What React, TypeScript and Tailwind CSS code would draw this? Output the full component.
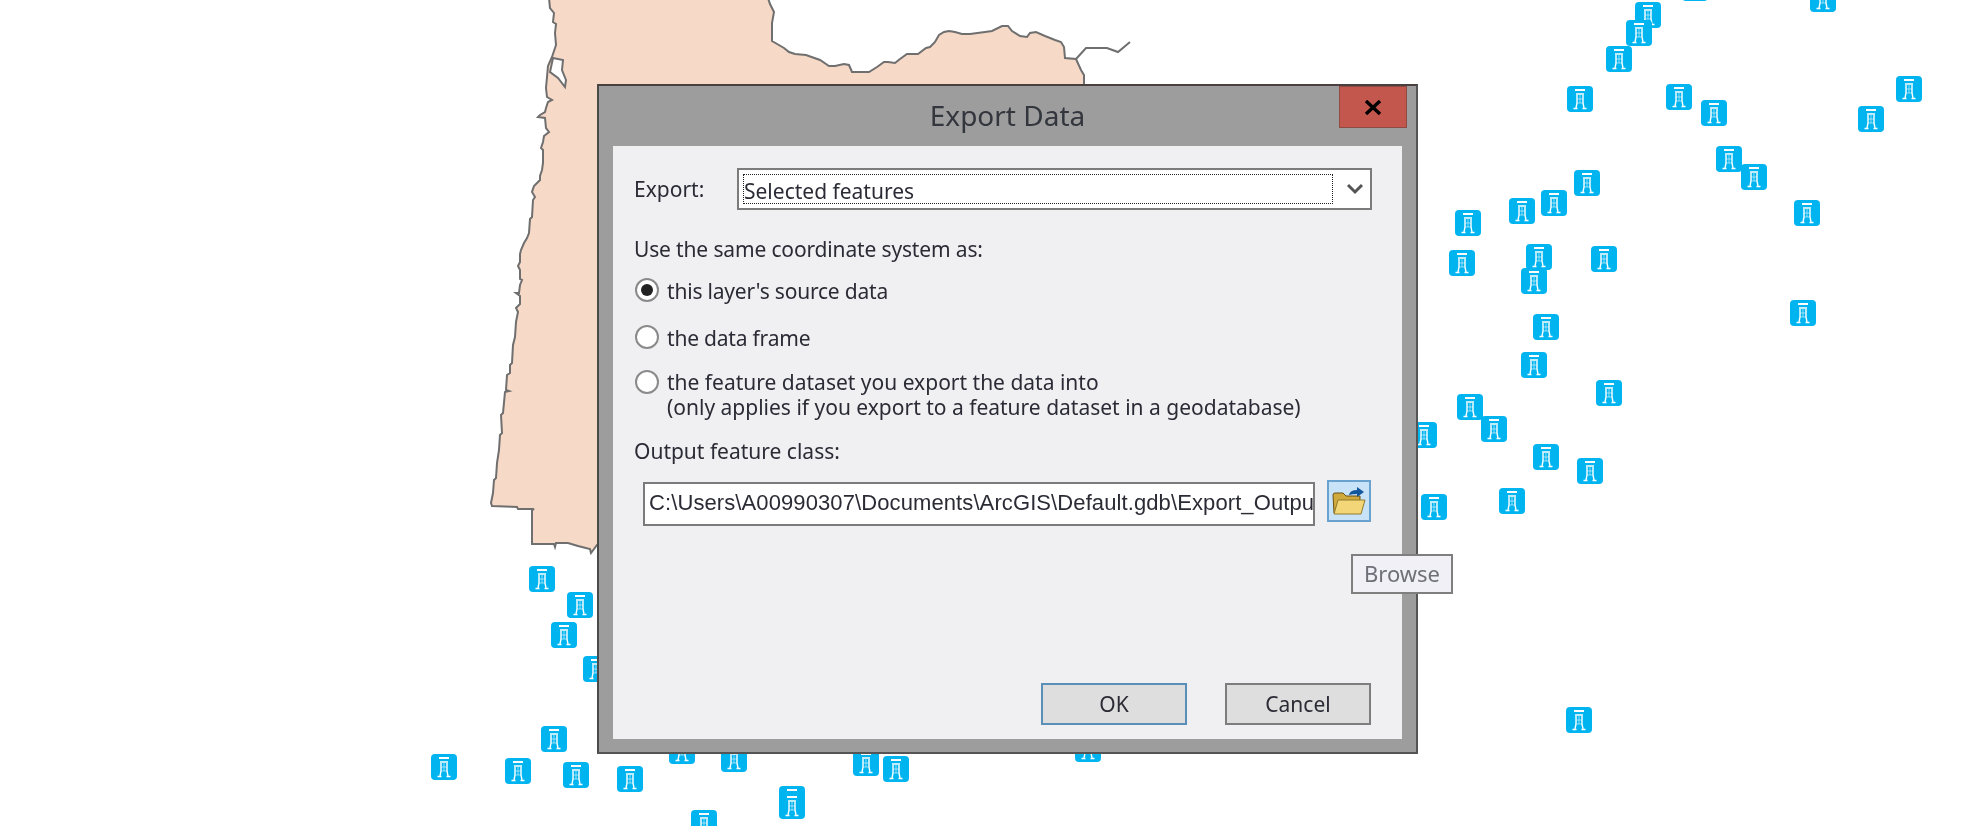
const PINS: [number, number][] = [
  [1648, 15], [1639, 33], [1619, 59], [1580, 99], [1679, 97], [1714, 113], [1823, -1], [1695, -12],
  [1909, 89], [1871, 119], [1729, 159], [1754, 177], [1807, 213], [1587, 183], [1554, 203], [1522, 211],
  [1468, 223], [1462, 263], [1539, 257], [1604, 259], [1534, 281], [1803, 313], [1546, 327], [1534, 365],
  [1609, 393], [1470, 407], [1494, 429], [1424, 435], [1546, 457], [1590, 471], [1512, 501], [1434, 507],
  [1579, 720], [542, 579], [580, 605], [564, 635], [596, 669], [554, 739], [444, 767], [518, 771],
  [576, 775], [630, 779], [682, 751], [734, 759], [866, 763], [896, 769], [792, 799], [792, 806],
  [704, 823], [1088, 749],
];

const LAND =
  "549,-2 550,8 554,13 553,22 556,24 555,33 556,45 552,57 548,66 547,77 546,88 547,97 552,100 548,102 546,108 545,112 540,115 538,117 545,118 546,128 549,132 544,136 543,142 541,148 543,150 543,163 542,170 540,176 540,180 534,186 532,192 535,197 533,200 532,217 530,219 529,233 527,238 524,243 521,250 520,254 520,262 518,266 520,270 520,279 522,280 520,285 519,293 516,293 520,296 520,304 516,308 518,312 516,322 515,337 513,345 512,363 510,365 510,373 507,375 506,390 509,391 505,392 503,413 501,415 502,433 500,435 499,450 497,463 496,478 494,480 493,493 491,503 492,506 517,507 518,509 534,509 532,510 532,544 554,544 555,547 556,543 568,543 578,546 590,549 591,553 597,545 700,545 1084,85 1084,75 1081,70 1076,59 1065,58 1064,47 1061,42 1055,40 1045,36 1036,32 1030,33 1027,37 1020,36 1012,31 1008,26 1002,26 992,31 985,32 970,34 962,34 955,32 949,31 944,32 939,35 935,42 930,47 926,48 918,54 907,54 900,59 895,63 888,62 884,62 877,67 869,72 855,72 852,72 849,65 844,64 835,66 829,66 820,60 806,55 795,54 789,52 784,48 772,41 772,23 774,12 770,4 768,-2";

function Pin({ x, y }: { x: number; y: number }) {
  return (
    <div
      className="absolute h-[26px] w-[26px] rounded-[4px] bg-[#00b4f0]"
      style={{ left: x - 13, top: y - 13 }}
    >
      <svg viewBox="0 0 26 26" className="h-full w-full" fill="none" stroke="#fff">
        <path d="M8 4h10" strokeWidth="2" />
        <path d="M9 8h8" strokeWidth="1.5" />
        <path d="M10 9v8l-1 5M16 9v8l1 5" strokeWidth="1.4" />
        <path d="M10 13h6M10 17h6M13 9v8" strokeWidth="1" opacity="0.55" />
        <path d="M6.5 22.5h4M15.5 22.5h4" strokeWidth="1.4" />
      </svg>
    </div>
  );
}

function Radio({ checked }: { checked?: boolean }) {
  return (
    <span className="flex h-[24px] w-[24px] shrink-0 items-center justify-center rounded-full border-2 border-[#8a8a8a] bg-white">
      {checked && <span className="h-[12px] w-[12px] rounded-full bg-[#222]" />}
    </span>
  );
}

function FolderIcon() {
  return (
    <svg width="36" height="32" viewBox="0 0 36 32">
      <path d="M3 28 2 10q0-2 2-2h8l3 3h14v17z" fill="#cfa93c" stroke="#6b5212" strokeWidth="1" />
      <path d="M3 29 7 15h27l-4 14z" fill="#f3d677" stroke="#8f7a2c" strokeWidth="1" />
      <path d="M18 10q1-5 8-5V2l7 5-7 5V9q-5 0-8 1z" fill="#12569c" />
    </svg>
  );
}

export default function App() {
  return (
    <div className="relative h-[826px] w-full overflow-hidden bg-white font-['Noto_Sans',sans-serif] blur-[0.5px]">
      {/* map */}
      <svg className="absolute left-0 top-0" width="1981" height="826">
        <polygon points={LAND} fill="#f7d9c8" stroke="#6f6f6f" strokeWidth="2" />
        <polygon points="553,58 563,60 562,70 566,80 565,87 558,78 550,72" fill="#fff" stroke="#6f6f6f" strokeWidth="2" />
        <polyline points="1076,59 1086,48 1107,48 1118,52 1130,42" fill="none" stroke="#6f6f6f" strokeWidth="2" />
      </svg>
      {PINS.map(([x, y]) => (
        <Pin key={`${x}-${y}`} x={x} y={y} />
      ))}

      {/* dialog */}
      <div className="absolute left-[597px] top-[84px] flex h-[670px] w-[821px] flex-col border-2 border-t-[#4a4040] border-r-[#555] border-b-[#555] border-l-[#4a4a4a] bg-[#9d9d9d] text-[21px] leading-[26px] text-[#2b2b35]">
        <div className="relative flex h-[60px] shrink-0 items-center justify-center pb-[2px]">
          <span className="text-[28px] text-[#33363d]">Export Data</span>
          <div className="absolute right-[9px] top-0 flex h-[42px] w-[68px] items-center justify-center border border-[#8f4a44] bg-[#c4574d]">
            <svg width="18" height="15" viewBox="0 0 18 15" stroke="#000" strokeWidth="3.4" fill="none">
              <path d="M2 1l14 13M16 1 2 14" />
            </svg>
          </div>
        </div>

        <div className="mx-[14px] mb-[13px] flex flex-1 flex-col bg-[#f0eff2] pl-[21px] pr-[30px] pt-[22px] pb-[14px]">
          <div className="flex h-[42px] items-center">
            <span className="w-[103px] shrink-0 leading-[28px]">Export:</span>
            <div className="flex h-[42px] flex-1 items-center border-2 border-[#7b7b7b] bg-white pl-[4px] pr-[4px]">
              <div className="flex h-[30px] w-[590px] items-center border border-dotted border-[#222] pt-[3px]">
                <span>Selected features</span>
              </div>
              <svg className="ml-[13px]" width="18" height="12" viewBox="0 0 18 12" fill="none" stroke="#555" strokeWidth="3">
                <path d="M2 2l7 7 7-7" />
              </svg>
            </div>
          </div>

          <div className="mt-[26px] tracking-[-0.15px]">Use the same coordinate system as:</div>

          <div className="mt-[15px] flex h-[26px] items-center gap-[8px] pl-px">
            <Radio checked />
            <span className="self-start leading-[29px] tracking-[-0.2px]">this layer's source data</span>
          </div>
          <div className="mt-[21px] flex h-[26px] items-center gap-[8px] pl-px">
            <Radio />
            <span className="self-start leading-[28px] tracking-[-0.2px]">the data frame</span>
          </div>
          <div className="mt-[20px] flex items-start gap-[8px] pl-px">
            <Radio />
            <span className="leading-[25px]">
              the feature dataset you export the data into
              <br />
              (only applies if you export to a feature dataset in a geodatabase)
            </span>
          </div>

          <div className="mt-[18px]">Output feature class:</div>

          <div className="mt-[16px] flex items-start">
            <div className="ml-[9px] mt-[2px] flex h-[44px] w-[672px] items-center overflow-hidden whitespace-nowrap border-2 border-[#7b7b7b] bg-white pb-[2px] pl-[4px] font-['Liberation_Sans',sans-serif] text-[22px] tracking-[0.1px]">
              C:\Users\A00990307\Documents\ArcGIS\Default.gdb\Export_Output
            </div>
            <div className="ml-[12px] flex h-[42px] w-[44px] items-center justify-center border-2 border-[#6aa2cf] bg-[#c8e2f8]">
              <FolderIcon />
            </div>
          </div>

          <div className="mr-px mt-auto flex justify-end gap-[38px]">
            <div className="flex h-[42px] w-[146px] items-center justify-center border-2 border-[#5a8fb8] bg-[#dedede]">OK</div>
            <div className="flex h-[42px] w-[146px] items-center justify-center border-2 border-[#7d7d7d] bg-[#dedede]">Cancel</div>
          </div>
        </div>
      </div>

      {/* tooltip */}
      <div className="absolute left-[1351px] top-[554px] flex h-[40px] w-[102px] items-center justify-center border-2 border-[#7f7f7f] bg-[#f0f0f6] pb-[2px] text-[22px] text-[#6f6f78]">
        Browse
      </div>
    </div>
  );
}
